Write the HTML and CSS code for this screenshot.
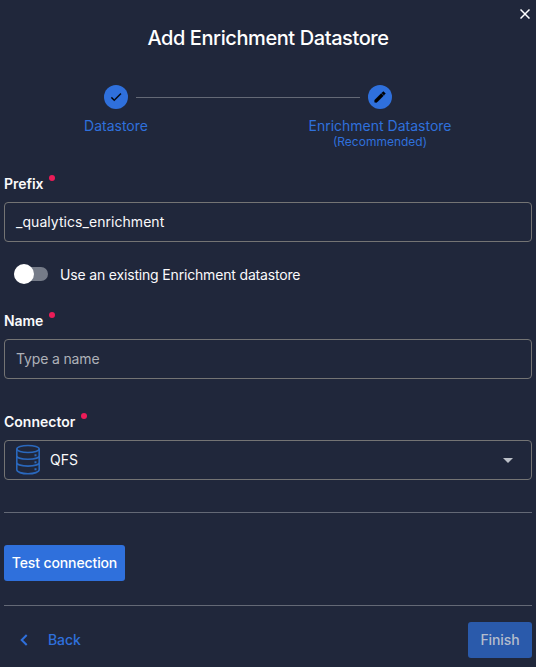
FILE: index.html
```html
<!DOCTYPE html>
<html lang="en">
<head>
<meta charset="utf-8">
<title>Add Enrichment Datastore</title>
<link rel="stylesheet" href="styles.css">
</head>
<body>
<main class="dialog">
  <button class="close" aria-label="Close"><svg width="10" height="10" viewBox="0 0 10 10"><path d="M.5.5l9 9M9.500.5l-9 9" stroke="#fff" stroke-width="1.5"/></svg></button>
  <h1 class="title">Add Enrichment Datastore</h1>
  <div class="stepper">
    <div class="step">
      <span class="step-dot"><svg width="14" height="14" viewBox="0 0 24 24"><path d="M21 7 9 19l-5.500-5.500 1.410-1.410L9 16.170 19.590 5.590z" stroke="#000" stroke-width=".5"/></svg></span>
      <span class="step-label">Datastore</span>
    </div>
    <div class="step-line"></div>
    <div class="step">
      <span class="step-dot"><svg width="14" height="14" viewBox="0 0 24 24"><path d="M20.710 7.040c.39-.39.39-1.040 0-1.410l-2.340-2.340c-.37-.39-1.020-.39-1.410 0l-1.840 1.830 3.750 3.750M3 17.250V21h3.750L17.810 9.930l-3.750-3.750z" stroke="#000" stroke-width="1" stroke-linejoin="round"/></svg></span>
      <span class="step-label">Enrichment Datastore</span>
      <span class="step-note">(Recommended)</span>
    </div>
  </div>

  <label class="label">Prefix<i class="required"></i></label>
  <div class="field value">_qualytics_enrichment</div>

  <div class="switch-row">
    <span class="switch"><span class="thumb"></span></span>
    <span>Use an existing Enrichment datastore</span>
  </div>

  <label class="label">Name<i class="required"></i></label>
  <div class="field placeholder">Type a name</div>

  <label class="label connector-label">Connector<i class="required"></i></label>
  <div class="field select">
    <svg class="database" width="26" height="32" viewBox="0 0 26 32" fill="none" stroke="#2a68bd" stroke-width="1.600">
      <ellipse cx="13" cy="5" rx="11.200" ry="3.500"/>
      <path d="M1.800 5v6.800c0 2.100 5 3.500 11.200 3.500s11.200-1.400 11.200-3.500V5M1.800 12v6.600c0 2.100 5 3.500 11.200 3.500s11.200-1.400 11.200-3.500V12M1.800 18.800v7c0 2.200 5 4 11.200 4s11.200-1.800 11.200-4v-7"/>
      <path d="M19.500 11.300h2M19.500 18.200h2M19.500 25.200h2" stroke-width="2"/>
    </svg>
    <span>QFS</span>
    <svg class="caret" width="10" height="5" viewBox="0 0 10 5"><path d="M0 0h10L5 5z" fill="#bcc0c8"/></svg>
  </div>

  <hr class="divider">
  <button class="button test">Test connection</button>
  <hr class="divider footer-divider">
  <footer class="footer">
    <button class="back"><svg width="8" height="12" viewBox="0 0 8 12"><path d="M6.700 1 1.700 6l5 5" fill="none" stroke="#2f70dc" stroke-width="2"/></svg><span>Back</span></button>
    <button class="button finish">Finish</button>
  </footer>
</main>
</body>
</html>
```
FILE: styles.css
```css
* { box-sizing: border-box; }
body {
  margin: 0;
  background: #20273b;
  color: #fafafb;
  font: 14px/20px Inter, "Liberation Sans", sans-serif;
}
button { border: 0; padding: 0; background: none; color: inherit; font: inherit; }
svg { display: block; flex: none; }
.dialog { position: relative; display: flex; flex-direction: column; height: 667px; padding: 24px 4px 0; overflow: hidden; }
.close { position: absolute; top: 9px; right: 6px; }
.title { margin: 0; color: #fff; font-size: 20px; line-height: 28px; font-weight: 500; text-align: center; letter-spacing: -.41px; }
.stepper { display: flex; justify-content: center; height: 65px; margin-top: 33px; padding-right: 40px; }
.step { display: flex; flex-direction: column; align-items: center; width: 24px; color: #2f70dc; white-space: nowrap; }
.step-dot { display: flex; align-items: center; justify-content: center; width: 24px; height: 24px; border-radius: 50%; background: #2f70dc; }
.step-label { margin-top: 7px; }
.step-note { font-size: 12px; line-height: 14px; margin-top: -1px; }
.step-line { width: 224px; height: 1px; margin: 12px 8px 0; background: #646976; }
.label { display: flex; height: 28px; margin-top: 24px; font-weight: 600; letter-spacing: -.05px; }
.required { width: 6px; height: 6px; margin: 1px 0 0 5.500px; border-radius: 50%; background: #ec1c58; }
.field { display: flex; align-items: center; height: 40px; padding: 0 11px; border: 1px solid #747474; border-radius: 4px; }
.value { letter-spacing: .05px; }
.placeholder { color: #aeb1b8; letter-spacing: -.15px; }
.switch-row { display: flex; align-items: center; height: 20px; margin: 23px 0 2px 10px; letter-spacing: -.17px; }
.switch { display: flex; align-items: center; width: 34px; height: 14px; margin-right: 12px; border-radius: 7px; background: #757b88; transform: translateY(-1px); }
.thumb { width: 20px; height: 20px; border-radius: 50%; background: #fff; flex: none; }
.connector-label { margin-top: 33px; letter-spacing: 0; }
.database { margin-right: 9px; margin-left: -1px; }
.caret { margin-left: auto; margin-right: 7px; }
.divider { width: 100%; height: 1px; margin: 32px 0; border: 0; background: #646976; flex: none; }
.button { height: 36px; border-radius: 3px; background: #2f70dc; color: #fff; font-weight: 500; }
.test { width: 121px; letter-spacing: -.12px; }
.footer-divider { margin: 24px 0 16px; }
.footer { display: flex; justify-content: space-between; align-items: center; }
.back { display: flex; align-items: center; gap: 20px; margin-left: 16px; color: #2f70dc; font-weight: 500; letter-spacing: -.1px; }
.finish { width: 64px; background: #2a5aab; color: #b4bdcd; letter-spacing: -.1px; }
```
